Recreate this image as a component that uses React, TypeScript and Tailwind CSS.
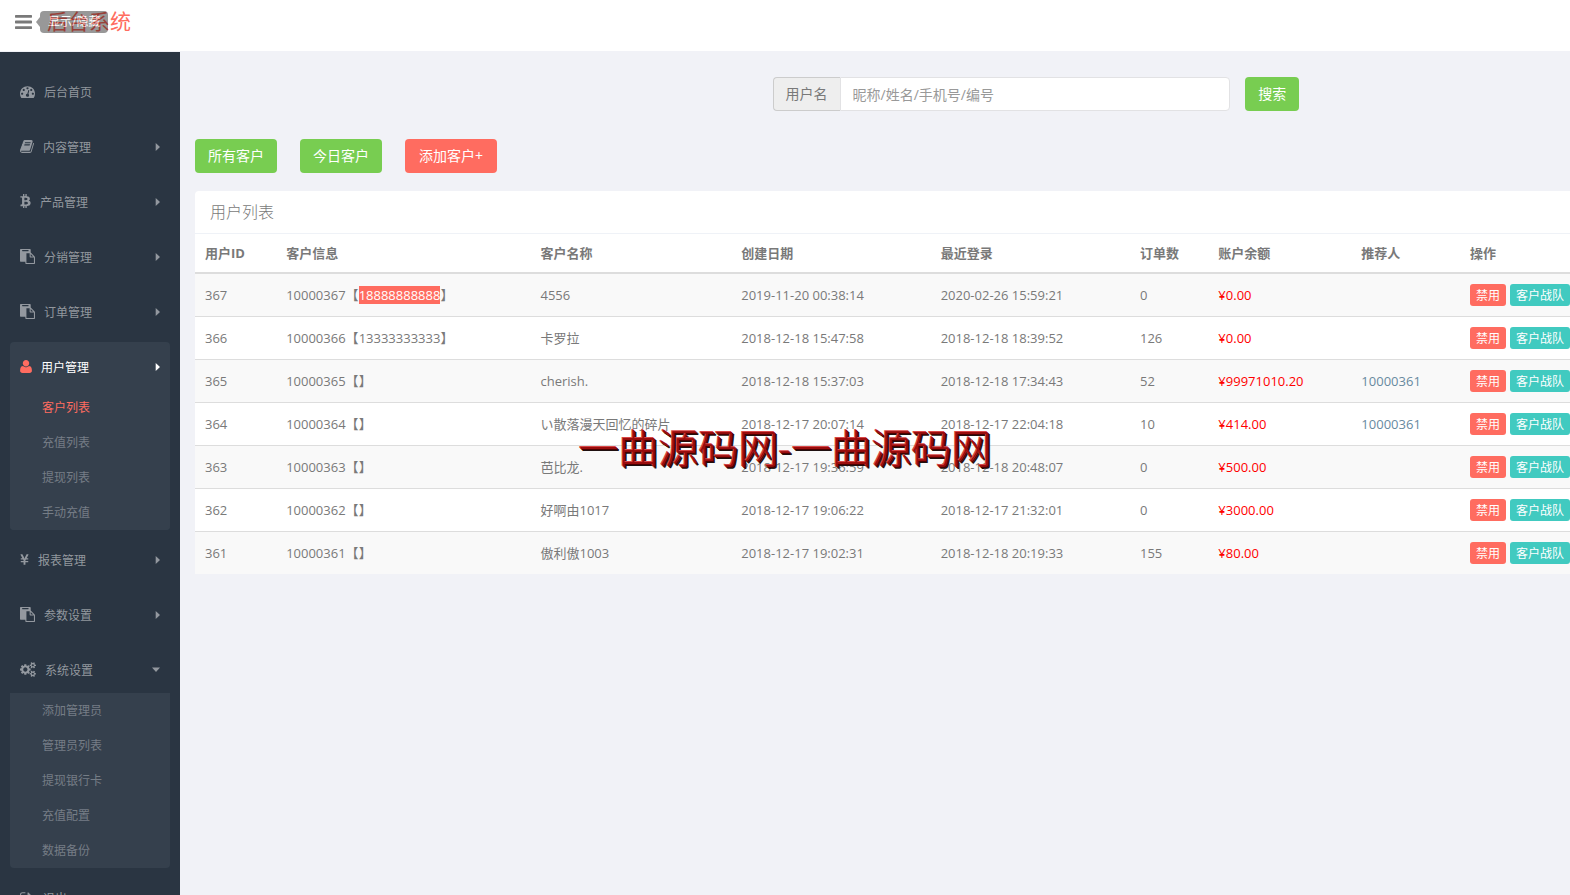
import { useState } from "react";
import { FaBtc, FaYenSign } from "react-icons/fa";

const PATHS = {
  bars: "M1664 1344v128q0 26-19 45t-45 19h-1408q-26 0-45-19t-19-45v-128q0-26 19-45t45-19h1408q26 0 45 19t19 45zm0-512v128q0 26-19 45t-45 19h-1408q-26 0-45-19t-19-45v-128q0-26 19-45t45-19h1408q26 0 45 19t19 45zm0-512v128q0 26-19 45t-45 19h-1408q-26 0-45-19t-19-45v-128q0-26 19-45t45-19h1408q26 0 45 19t19 45z",
  dashboard:
    "M384 1152q0-53-37.5-90.5t-90.5-37.5-90.5 37.5-37.5 90.5 37.5 90.5 90.5 37.5 90.5-37.5 37.5-90.5zm192-448q0-53-37.5-90.5t-90.5-37.5-90.5 37.5-37.5 90.5 37.5 90.5 90.5 37.5 90.5-37.5 37.5-90.5zm428 481l101-382q6-26-7.5-48.5t-38.5-29.5-48 6.5-30 39.5l-101 382q-60 5-107 43.5t-63 98.5q-20 77 20 146t117 89 146-20 89-117q16-60-6-117t-72-91zm660-33q0-53-37.5-90.5t-90.5-37.5-90.5 37.5-37.5 90.5 37.5 90.5 90.5 37.5 90.5-37.5 37.5-90.5zm-640-640q0-53-37.5-90.5t-90.5-37.5-90.5 37.5-37.5 90.5 37.5 90.5 90.5 37.5 90.5-37.5 37.5-90.5zm448 192q0-53-37.5-90.5t-90.5-37.5-90.5 37.5-37.5 90.5 37.5 90.5 90.5 37.5 90.5-37.5 37.5-90.5zm320 448q0 261-141 483-19 29-54 29h-1402q-35 0-54-29-141-221-141-483 0-182 71-348t191-286 286-191 348-71 348 71 286 191 191 286 71 348z",
  book: "M1703 478q40 57 18 129l-275 906q-19 64-76.5 107.5t-122.5 43.5h-923q-77 0-148.5-53.5t-99.5-131.5q-24-67-2-127 0-4 3-27t4-37q1-8-3-21.5t-3-19.5q2-11 8-21t16.5-23.5 16.5-23.5q23-38 45-91.5t30-91.5q3-10 .5-30t-.5-28q3-11 17-28t17-23q21-36 42-92t25-90q1-9-2.5-32t.5-28q4-13 22-30.5t22-22.5q19-26 42.5-84.5t27.5-96.5q1-8-3-25.5t-2-26.5q2-8 9-18t18-23 17-21q8-12 16.5-30.5t15-35 16-36 19.5-32 26.5-23.5 36-11.5 47.5 5.5l-1 3q38-9 51-9h761q74 0 114 56t18 130l-274 906q-36 119-71.5 153.5t-128.5 34.5h-869q-27 0-38 15-11 16-1 43 24 70 144 70h923q29 0 56-15.5t35-41.5l300-987q7-22 5-57 38 15 59 43zm-1064 2q-4 13 2 22.5t20 9.5h608q13 0 25.5-9.5t16.5-22.5l21-64q4-13-2-22.5t-20-9.5h-608q-13 0-25.5 9.5t-16.5 22.5zm-83 256q-4 13 2 22.5t20 9.5h608q13 0 25.5-9.5t16.5-22.5l21-64q4-13-2-22.5t-20-9.5h-608q-13 0-25.5 9.5t-16.5 22.5z",
  paste:
    "M768 1664h896v-640h-416q-40 0-68-28t-28-68v-416h-384v1152zm256-1440v-64q0-13-9.5-22.5t-22.5-9.5h-704q-13 0-22.5 9.5t-9.5 22.5v64q0 13 9.5 22.5t22.5 9.5h704q13 0 22.5-9.5t9.5-22.5zm256 672h299l-299-299v299zm512 128v672q0 40-28 68t-68 28h-960q-40 0-68-28t-28-68v-160h-544q-40 0-68-28t-28-68v-1344q0-40 28-68t68-28h1088q40 0 68 28t28 68v328q21 13 36 28l408 408q28 28 48 76t20 88z",
  user: "M1600 1405q0 120-73 189.5t-194 69.5h-874q-121 0-194-69.5t-73-189.5q0-53 3.5-103.5t14-109 26.5-108.5 43-97.5 62-81 85.5-53.5 111.5-20q9 0 42 21.5t74.5 48 108 48 133.5 21.5 133.5-21.5 108-48 74.5-48 42-21.5q61 0 111.5 20t85.5 53.5 62 81 43 97.5 26.5 108.5 14 109 3.5 103.5zm-320-893q0 159-112.5 271.5t-271.5 112.5-271.5-112.5-112.5-271.5 112.5-271.5 271.5-112.5 271.5 112.5 112.5 271.5z",
  cogs: "M896 896q0-106-75-181t-181-75-181 75-75 181 75 181 181 75 181-75 75-181zm768 512q0-52-38-90t-90-38-90 38-38 90q0 53 37.5 90.5t90.5 37.5 90.5-37.5 37.5-90.5zm0-1024q0-52-38-90t-90-38-90 38-38 90q0 53 37.5 90.5t90.5 37.5 90.5-37.5 37.5-90.5zm-384 421v185q0 10-7 19.5t-16 10.5l-155 24q-11 35-32 76 34 48 90 115 7 11 7 20 0 12-7 19-23 30-82.5 89.5t-78.5 59.5q-11 0-21-7l-115-90q-37 19-77 31-11 108-23 155-7 24-30 24h-186q-11 0-20-7.5t-10-17.5l-23-153q-34-10-75-31l-118 89q-7 7-20 7-11 0-21-8-144-133-144-160 0-9 7-19 10-14 41-53t47-61q-23-44-35-82l-152-24q-10-1-17-9.5t-7-19.5v-185q0-10 7-19.5t16-10.5l155-24q11-35 32-76-34-48-90-115-7-11-7-20 0-12 7-20 22-30 82-89t79-59q11 0 21 7l115 90q34-18 77-32 11-108 23-154 7-24 30-24h186q11 0 20 7.5t10 17.5l23 153q34 10 75 31l118-89q8-7 20-7 11 0 21 8 144 133 144 160 0 8-7 19-12 16-42 54t-45 60q23 48 34 82l152 23q10 2 17 10.5t7 19.5zm640 533v140q0 16-149 31-12 27-30 52 51 113 51 138 0 4-4 7-122 71-124 71-8 0-46-47t-52-68q-20 2-30 2t-30-2q-14 21-52 68t-46 47q-2 0-124-71-4-3-4-7 0-25 51-138-18-25-30-52-149-15-149-31v-140q0-16 149-31 13-29 30-52-51-113-51-138 0-4 4-7 4-2 35-20t59-34 30-16q8 0 46 46.5t52 67.5q20-2 30-2t30 2q51-71 92-112l6-2q4 0 124 70 4 3 4 7 0 25-51 138 17 23 30 52 149 15 149 31zm0-1024v140q0 16-149 31-12 27-30 52 51 113 51 138 0 4-4 7-122 71-124 71-8 0-46-47t-52-68q-20 2-30 2t-30-2q-14 21-52 68t-46 47q-2 0-124-71-4-3-4-7 0-25 51-138-18-25-30-52-149-15-149-31v-140q0-16 149-31 13-29 30-52-51-113-51-138 0-4 4-7 4-2 35-20t59-34 30-16q8 0 46 46.5t52 67.5q20-2 30-2t30 2q51-71 92-112l6-2q4 0 124 70 4 3 4 7 0 25-51 138 17 23 30 52 149 15 149 31z",
  signOut:
    "M704 1440q0 4 1 20t.5 26.5-3 23.5-10 19.5-20.5 6.5h-320q-119 0-203.5-84.5t-84.5-203.5v-704q0-119 84.5-203.5t203.5-84.5h320q13 0 22.5 9.5t9.5 22.5q0 4 1 20t.5 26.5-3 23.5-10 19.5-20.5 6.5h-320q-66 0-113 47t-47 113v704q0 66 47 113t113 47h312l11.5 1 11.5 3 8 5.5 7 9 2 13.5zm928-544q0 26-19 45l-544 544q-19 19-45 19t-45-19-19-45v-288h-448q-26 0-45-19t-19-45v-384q0-26 19-45t45-19h448v-288q0-26 19-45t45-19 45 19l544 544q19 19 19 45z",
};

function Glyph({ d, box, className }: { d: string; box: string; className: string }) {
  return (
    <svg viewBox={box} className={`shrink-0 ${className}`} fill="currentColor" aria-hidden="true">
      <path d={d} />
    </svg>
  );
}

const pasteIcon = <Glyph d={PATHS.paste} box="0 0 1792 1792" className="w-[15px] h-[15px]" />;

const menu = [
  {
    label: "后台首页",
    icon: <Glyph d={PATHS.dashboard} box="0 0 1792 1792" className="w-[15px] h-[15px]" />,
    leaf: true,
  },
  {
    label: "内容管理",
    icon: <Glyph d={PATHS.book} box="64 0 1664 1792" className="w-[14px] h-[15px]" />,
  },
  { label: "产品管理", icon: <FaBtc className="w-[11px] h-[14px] shrink-0" /> },
  { label: "分销管理", icon: pasteIcon },
  { label: "订单管理", icon: pasteIcon },
  {
    label: "用户管理",
    icon: (
      <Glyph d={PATHS.user} box="192 0 1408 1792" className="w-[12px] h-[15px] text-[#ff6c60]" />
    ),
    active: true,
    children: ["客户列表", "充值列表", "提现列表", "手动充值"],
  },
  { label: "报表管理", icon: <FaYenSign className="w-[9px] h-[15px] shrink-0" /> },
  { label: "参数设置", icon: pasteIcon },
  {
    label: "系统设置",
    icon: <Glyph d={PATHS.cogs} box="0 0 1920 1792" className="w-[16px] h-[15px]" />,
    open: true,
    children: ["添加管理员", "管理员列表", "提现银行卡", "充值配置", "数据备份"],
  },
  {
    label: "退出",
    icon: <Glyph d={PATHS.signOut} box="64 0 1664 1792" className="w-[14px] h-[15px]" />,
    leaf: true,
  },
];

const columns = [
  { title: "用户ID", width: "w-[5.9%]" },
  { title: "客户信息", width: "w-[18.5%]" },
  { title: "客户名称", width: "w-[14.6%]" },
  { title: "创建日期", width: "w-[14.5%]" },
  { title: "最近登录", width: "w-[14.5%]" },
  { title: "订单数", width: "w-[5.7%]" },
  { title: "账户余额", width: "w-[10.4%]" },
  { title: "推荐人", width: "w-[7.9%]" },
  { title: "操作", width: "w-[8%]" },
];

const customers = [
  { id: 367, phone: "18888888888", name: "4556", created: "2019-11-20 00:38:14", login: "2020-02-26 15:59:21", orders: 0, balance: "0.00", referrer: "", marked: true },
  { id: 366, phone: "13333333333", name: "卡罗拉", created: "2018-12-18 15:47:58", login: "2018-12-18 18:39:52", orders: 126, balance: "0.00", referrer: "" },
  { id: 365, phone: "", name: "cherish.", created: "2018-12-18 15:37:03", login: "2018-12-18 17:34:43", orders: 52, balance: "99971010.20", referrer: "10000361" },
  { id: 364, phone: "", name: "い散落漫天回忆的碎片", created: "2018-12-17 20:07:14", login: "2018-12-17 22:04:18", orders: 10, balance: "414.00", referrer: "10000361" },
  { id: 363, phone: "", name: "芭比龙.", created: "2018-12-17 19:36:59", login: "2018-12-18 20:48:07", orders: 0, balance: "500.00", referrer: "" },
  { id: 362, phone: "", name: "好啊由1017", created: "2018-12-17 19:06:22", login: "2018-12-17 21:32:01", orders: 0, balance: "3000.00", referrer: "" },
  { id: 361, phone: "", name: "傲利傲1003", created: "2018-12-17 19:02:31", login: "2018-12-18 20:19:33", orders: 155, balance: "80.00", referrer: "" },
];

function Sidebar() {
  return (
    <nav className="w-[180px] shrink-0 bg-[#2a3542] px-2.5 pt-[15px] text-xs text-[#aeb2b7]/80">
      <ul className="flex flex-col gap-[5px]">
        {menu.map((item) => (
          <li key={item.label} className={item.active ? "rounded bg-[#35404d]" : ""}>
            <a
              href="#"
              className={`flex h-[50px] items-center px-2.5 ${item.active ? "text-white" : ""}`}
            >
              <span className="pb-0.5">{item.icon}</span>
              <span className="ml-[9px] grow pt-0.5">{item.label}</span>
              {!item.leaf && (
                <svg viewBox="0 0 8 8" className="h-2 w-2" fill="currentColor" aria-hidden="true">
                  <path d={item.open ? "M0 1.5h8l-4 4.5z" : "M3.7 0l4.3 4-4.3 4z"} />
                </svg>
              )}
            </a>
            {item.children && (
              <ul className="-mt-0.5 rounded-b bg-[#35404d]">
                {item.children.map((child) => (
                  <li key={child}>
                    <a
                      href="#"
                      className={`block pl-8 leading-[35px] ${
                        child === "客户列表" ? "text-[#ff6c60]" : "text-[#757d86]"
                      }`}
                    >
                      {child}
                    </a>
                  </li>
                ))}
              </ul>
            )}
          </li>
        ))}
      </ul>
    </nav>
  );
}

function CustomerTable() {
  return (
    <table className="w-full table-fixed text-left text-[13px] leading-[18px] whitespace-nowrap">
      <thead>
        <tr className="border-b-2 border-[#dddddd]">
          {columns.map((col) => (
            <th key={col.title} className={`h-[39px] pl-2.5 font-bold ${col.width}`}>
              {col.title}
            </th>
          ))}
        </tr>
      </thead>
      <tbody>
        {customers.map((c) => (
          <tr key={c.id} className="border-t border-[#dddddd] odd:bg-[#f9f9f9]">
            <td className="h-[43px] pl-2.5">{c.id}</td>
            <td className="pl-2.5">
              10000{c.id}【
              {c.marked ? <span className="bg-[#ff6c60] text-white">{c.phone}</span> : c.phone}】
            </td>
            <td className="pl-2.5">{c.name}</td>
            <td className="pl-2.5">{c.created}</td>
            <td className="pl-2.5">{c.login}</td>
            <td className="pl-2.5">{c.orders}</td>
            <td className="pl-2.5 text-[#ff0000]">¥{c.balance}</td>
            <td className="pl-2.5 text-[#688a9f]">{c.referrer}</td>
            <td className="pl-2.5">
              <div className="flex gap-1 text-xs text-white">
                <button className="h-[22px] shrink-0 rounded-[3px] bg-[#ff6c60] px-1.5 pt-0.5">
                  禁用
                </button>
                <button className="h-[22px] shrink-0 rounded-[3px] bg-[#41cac0] px-1.5 pt-0.5">
                  客户战队
                </button>
              </div>
            </td>
          </tr>
        ))}
      </tbody>
    </table>
  );
}

export default function App() {
  const [keyword, setKeyword] = useState("");

  return (
    <div className="relative flex h-screen flex-col overflow-hidden bg-[#f1f2f7] font-['Open_Sans','Noto_Sans_CJK_SC',sans-serif] text-[#797979]">
      <header className="flex h-[52px] shrink-0 border-b border-[#f1f2f7] bg-white pl-[15px]">
        <div className="relative flex h-11 items-center">
          <button aria-label="显示/隐藏">
            <Glyph d={PATHS.bars} box="128 0 1536 1792" className="h-5 w-[17px]" />
          </button>
          <div
            role="tooltip"
            className="absolute left-[21px] z-10 flex items-center whitespace-nowrap opacity-40"
          >
            <span className="border-y-[5px] border-r-[4px] border-y-transparent border-r-black" />
            <span className="rounded bg-black px-2 text-xs leading-[22px] text-white">
              显示/隐藏
            </span>
          </div>
        </div>
        <a href="#" className="ml-[15px] text-[21px] leading-[42px] text-[#ff6c60]">
          后台系统
        </a>
      </header>

      <div className="flex min-h-0 grow">
        <Sidebar />
        <main className="min-w-0 grow pl-[15px] pt-[25px] text-sm">
          <form className="ml-[42%] flex" onSubmit={(e) => e.preventDefault()}>
            <div className="flex h-[34px] w-[57.4%]">
              <label
                htmlFor="keyword"
                className="flex shrink-0 items-center rounded-l border border-r-0 border-[#cccccc] bg-[#eeeeee] px-3"
              >
                用户名
              </label>
              <input
                id="keyword"
                value={keyword}
                onChange={(e) => setKeyword(e.target.value)}
                placeholder="昵称/姓名/手机号/编号"
                className="min-w-0 grow rounded-r border border-[#e2e2e4] bg-white px-3 pt-0.5 placeholder:text-[#999999]"
              />
            </div>
            <button className="ml-[15px] h-[34px] rounded bg-[#78cd51] px-[13px] text-white">
              搜索
            </button>
          </form>

          <div className="mt-7 flex gap-[23px] text-white">
            <button className="h-[34px] rounded bg-[#78cd51] px-[13px]">所有客户</button>
            <button className="h-[34px] rounded bg-[#78cd51] px-[13px]">今日客户</button>
            <button className="h-[34px] rounded bg-[#ff6c60] px-[14px]">添加客户+</button>
          </div>

          <section className="mt-[18px] rounded-tl bg-white">
            <h2 className="border-b border-[#eff2f7] px-[15px] text-base leading-[42px] font-light">
              用户列表
            </h2>
            <CustomerTable />
          </section>
        </main>
      </div>

      <div className="pointer-events-none absolute inset-x-0 top-1/2 -translate-y-1/2 text-center text-[40px] leading-[60px] font-light text-[#990d0d] [text-shadow:-1px_-1px_0_#d84848,1px_1px_0_#4a0000,2px_2px_0_#201010]">
        一曲源码网-一曲源码网
      </div>
    </div>
  );
}
